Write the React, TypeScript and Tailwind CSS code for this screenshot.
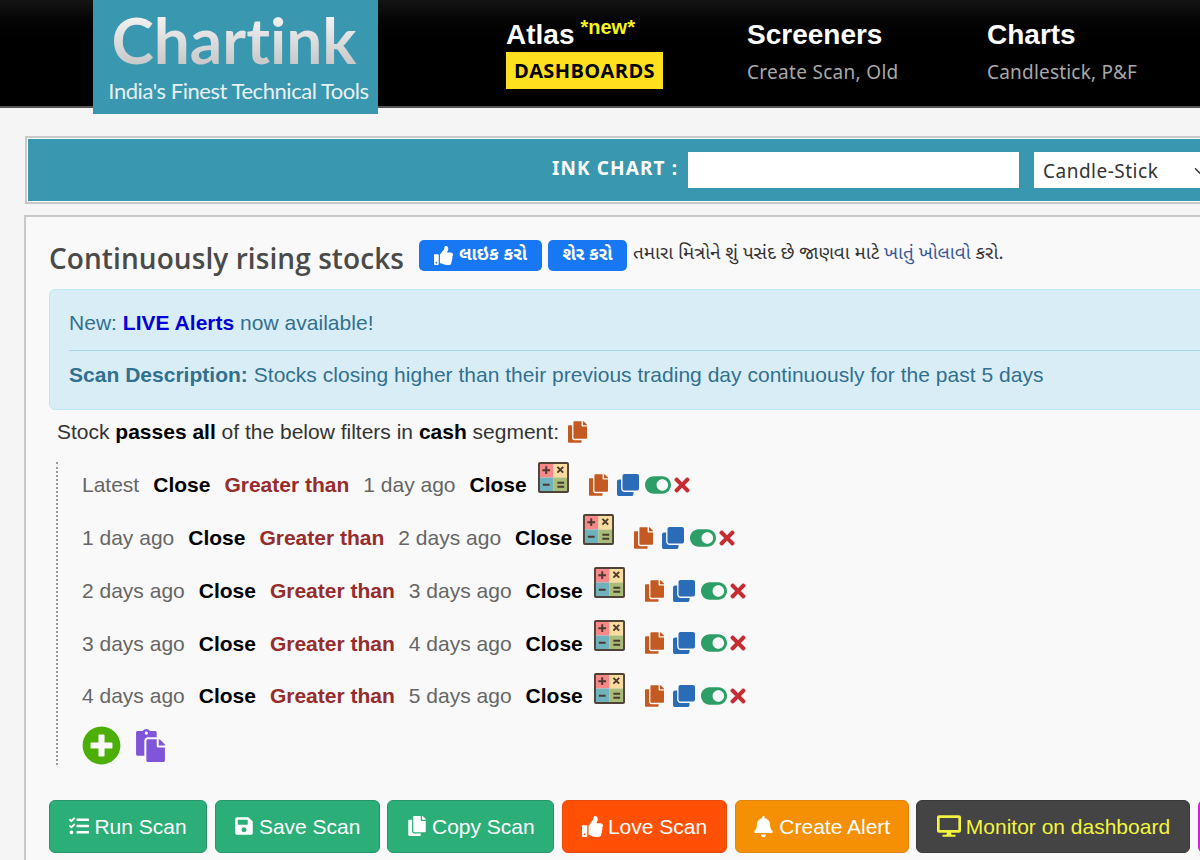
import { FaThumbsUp, FaTasks, FaSave, FaCopy, FaBell, FaDesktop, FaClone, FaToggleOn, FaTimes, FaPlusCircle, FaPaste } from "react-icons/fa";
import { ChevronDown } from "lucide-react";

const rows = [
  ["Latest", "1 day ago"],
  ["1 day ago", "2 days ago"],
  ["2 days ago", "3 days ago"],
  ["3 days ago", "4 days ago"],
  ["4 days ago", "5 days ago"],
];

function Calc() {
  return (
    <svg width="31" height="31" viewBox="0 0 32 32" className="shrink-0 -translate-y-2">
      <rect x="1" y="1" width="15" height="15" fill="#f98989" />
      <rect x="16" y="1" width="15" height="15" fill="#fbdca0" />
      <rect x="1" y="16" width="15" height="15" fill="#6fb1bd" />
      <rect x="16" y="16" width="15" height="15" fill="#a9bd78" />
      <rect x="1" y="1" width="30" height="30" fill="none" stroke="#4f4338" strokeWidth="2" rx="1" />
      <path d="M8.5 4.5v8M4.5 8.5h8M5 23.5h7M20 5l6 6M26 5l-6 6M20 21.5h7M20 25.5h7" stroke="#4a3a30" strokeWidth="2" fill="none" />
    </svg>
  );
}

const Btn = ({ cls, icon, label, w }: { cls: string; icon: React.ReactNode; label: string; w: string }) => (
  <button className={`h-[53px] shrink-0 rounded-[6px] border flex items-center justify-center gap-[5px] text-[21px] ${w} ${cls}`}>
    {icon}
    <span>{label}</span>
  </button>
);

export default function App() {
  return (
    <div className="w-[1200px] h-[860px] overflow-hidden bg-[#f5f5f5] font-['Liberation_Sans',sans-serif]">
      <header className="h-[108px] bg-gradient-to-b from-[#141414] via-[#000000] to-[#000000] border-b-2 border-[#555] flex items-start">
        <div className="ml-[93px] w-[285px] h-[114px] shrink-0 bg-[#3a97b0] flex flex-col items-center relative z-10 font-['Lato',sans-serif] [font-variant-ligatures:none]">
          <div className="text-[64px] leading-[76px] mt-[2px] mr-[3px] font-bold bg-gradient-to-b from-white to-[#bdbdbd] bg-clip-text text-transparent">Chartink</div>
          <div className="text-[22px] leading-[28px] mt-[-1px] ml-[6px] text-[#e8f1f4] tracking-[-0.45px] whitespace-nowrap">India's Finest Technical Tools</div>
        </div>
        <div className="ml-[128px] w-[241px] shrink-0 pt-[16px]">
          <div className="flex items-start h-[36px]">
            <span className="text-[28px] leading-[38px] font-bold text-white">Atlas</span>
            <span className="ml-[6px] text-[20px] leading-[22px] font-bold text-[#f5f51e]">*new*</span>
          </div>
          <span className="inline-block bg-[#ffe01f] text-black font-bold text-[20px] leading-[37px] h-[37px] w-[157px] text-center tracking-[0.4px] font-['Open_Sans',sans-serif]">DASHBOARDS</span>
        </div>
        <div className="w-[240px] shrink-0 pt-[16px]">
          <div className="text-[28px] leading-[38px] font-bold text-white">Screeners</div>
          <div className="text-[19px] leading-[36px] text-[#a8a8a8] tracking-[0.3px] font-['Noto_Sans',sans-serif]">Create Scan, Old</div>
        </div>
        <div className="w-[200px] shrink-0 pt-[16px]">
          <div className="text-[28px] leading-[38px] font-bold text-white">Charts</div>
          <div className="text-[19px] leading-[36px] text-[#a8a8a8] tracking-[0.2px] font-['Noto_Sans',sans-serif]">Candlestick, P&amp;F</div>
        </div>
      </header>

      <main className="pl-[24px] pt-[28px]">
        <div className="w-[1300px] h-[68px] border-2 border-[#c9c9c9] bg-white p-[1px] ml-[1px]">
          <div className="h-full bg-[#3a97b0] flex items-center pl-[524px]">
            <span className="w-[127px] shrink-0 mb-[4px] text-white font-bold text-[19px] tracking-[1.1px] font-['Noto_Sans',sans-serif] whitespace-nowrap">INK CHART :</span>
            <div className="ml-[9px] w-[331px] h-[36px] bg-white shrink-0" />
            <div className="ml-[15px] w-[200px] h-[36px] pt-[2px] bg-white shrink-0 flex items-center pl-[9px] text-[19px] text-[#333] tracking-[0.5px] font-['Noto_Sans',sans-serif]">
              Candle-Stick
              <ChevronDown className="ml-[33px] w-[18px] h-[18px] text-[#333]" />
            </div>
          </div>
        </div>

        <section className="mt-[11px] w-[1300px] h-[700px] border-2 border-[#c9c9c9] bg-[#f9f9f9] pl-[23px] pt-[20px]">
          <div className="flex items-center h-[42px]">
            <h1 className="text-[28px] leading-[42px] font-semibold text-[#4a4a4a] tracking-[0.08px] font-['Open_Sans',sans-serif] whitespace-nowrap">Continuously rising stocks</h1>
            <button className="ml-[15px] mb-[5px] w-[123px] h-[31px] rounded-[5px] bg-[#1877f2] text-white text-[18px] font-bold flex items-center justify-center gap-[6px] font-['Noto_Sans_Gujarati','Noto_Sans',sans-serif]">
              <FaThumbsUp className="text-[19px]" />લાઇક કરો
            </button>
            <button className="ml-[6px] mb-[5px] w-[79px] h-[31px] rounded-[5px] bg-[#1877f2] text-white text-[18px] font-bold font-['Noto_Sans_Gujarati','Noto_Sans',sans-serif]">શેર કરો</button>
            <span className="ml-[6px] mb-[5px] text-[18.8px] text-[#333] whitespace-nowrap font-['Noto_Sans_Gujarati','Noto_Sans',sans-serif]">
              તમારા મિત્રોને શું પસંદ છે જાણવા માટે <span className="text-[#385898]">ખાતું ખોલાવો</span> કરો.
            </span>
          </div>

          <div className="mt-[10px] w-[1240px] h-[121px] rounded-[6px] border border-[#bce8f1] bg-[#d9edf7] px-[19px] text-[#31708f] text-[21px] tracking-[0.02px]">
            <div className="h-[60px] pt-[6px] flex items-center">
              <span>New:&nbsp;<b className="text-[#0000d6]">LIVE Alerts</b> now available!</span>
            </div>
            <div className="border-t border-[#a9d8e8] h-[48px] flex items-center">
              <span><b>Scan Description:</b> Stocks closing higher than their previous trading day continuously for the past 5 days</span>
            </div>
          </div>

          <div className="ml-[8px] mt-[5px] h-[34px] flex items-center text-[21px] text-[#333]">
            <span>Stock <b className="text-black">passes all</b> of the below filters in <b className="text-black">cash</b> segment:</span>
            <FaCopy className="ml-[9px] text-[#c45a22] w-[19px] h-[24px]" />
          </div>

          <div className="ml-[7px] mt-[13px] border-l-2 border-dotted border-[#999] pl-[24px] w-[800px]">
            {rows.map((r, i) => (
              <div key={i} className="h-[52.75px] pt-[11px]">
                <div className="h-[24px] flex items-center text-[21px] whitespace-nowrap">
                  <span className="text-[#666]">{r[0]}</span>
                  <b className="ml-[14px] text-black">Close</b>
                  <b className="ml-[14px] text-[#962c2c]">Greater than</b>
                  <span className="ml-[14px] text-[#666]">{r[1]}</span>
                  <b className="ml-[14px] text-black">Close</b>
                  <span className="ml-[11px]"><Calc /></span>
                  <FaCopy className="ml-[20px] text-[#c45a22] w-[19px] h-[22px]" />
                  <FaClone className="ml-[9px] text-[#2b6cb8] w-[22px] h-[22px]" />
                  <FaToggleOn className="ml-[6px] text-[#2e9e68] w-[26px] h-[26px]" />
                  <FaTimes className="ml-[2px] text-[#c52d33] w-[18px] h-[22px]" />
                </div>
              </div>
            ))}
            <div className="flex items-start h-[39px]">
              <FaPlusCircle className="text-[#4caf08] w-[39px] h-[39px]" />
              <FaPaste className="ml-[14px] mt-[3px] text-[#7f56d9] w-[31px] h-[33px]" />
            </div>
          </div>

          <div className="mt-[35px] flex gap-[7.7px]">
            <Btn w="w-[158px]" cls="bg-[#2bae77] border-[#26966a] text-white" icon={<FaTasks className="text-[20px]" />} label="Run Scan" />
            <Btn w="w-[165px]" cls="bg-[#2bae77] border-[#26966a] text-white" icon={<FaSave className="text-[20px]" />} label="Save Scan" />
            <Btn w="w-[167px]" cls="bg-[#2bae77] border-[#26966a] text-white" icon={<FaCopy className="text-[20px]" />} label="Copy Scan" />
            <Btn w="w-[165px]" cls="bg-[#ff5006] border-[#e8490a] text-white" icon={<FaThumbsUp className="text-[21px]" />} label="Love Scan" />
            <Btn w="w-[174px]" cls="bg-[#f59005] border-[#e08410] text-white" icon={<FaBell className="text-[21px]" />} label="Create Alert" />
            <Btn w="w-[274px]" cls="bg-[#444444] border-[#3a3a3a] text-[#f2f53f]" icon={<FaDesktop className="text-[24px]" />} label="Monitor on dashboard" />
            <div className="h-[53px] w-[120px] shrink-0 rounded-[6px] bg-[#d81fd8]" />
          </div>
        </section>
      </main>
    </div>
  );
}
